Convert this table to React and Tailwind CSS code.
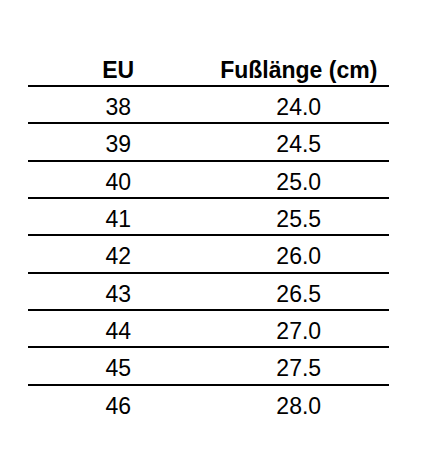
const rows = [
  ["38", "24.0"],
  ["39", "24.5"],
  ["40", "25.0"],
  ["41", "25.5"],
  ["42", "26.0"],
  ["43", "26.5"],
  ["44", "27.0"],
  ["45", "27.5"],
  ["46", "28.0"],
];

export default function App() {
  return (
    <div
      className="w-[422px] h-[462px] bg-white pt-[50px] pl-[28px] text-black"
      style={{ fontFamily: '"Liberation Sans", Arial, sans-serif' }}
    >
      <div className="w-[361px]">
        <div className="grid grid-cols-2 h-[35px] items-center pt-[3px] text-[23px] font-bold leading-normal">
          <div className="text-center">EU</div>
          <div className="text-center">Fußlänge (cm)</div>
        </div>
        {rows.map(([eu, len]) => (
          <div
            key={eu}
            className="grid grid-cols-2 h-[37.33px] items-center border-t-2 border-black pt-[3px] text-[23px] leading-normal"
          >
            <div className="text-center">{eu}</div>
            <div className="text-center">{len}</div>
          </div>
        ))}
      </div>
    </div>
  );
}
